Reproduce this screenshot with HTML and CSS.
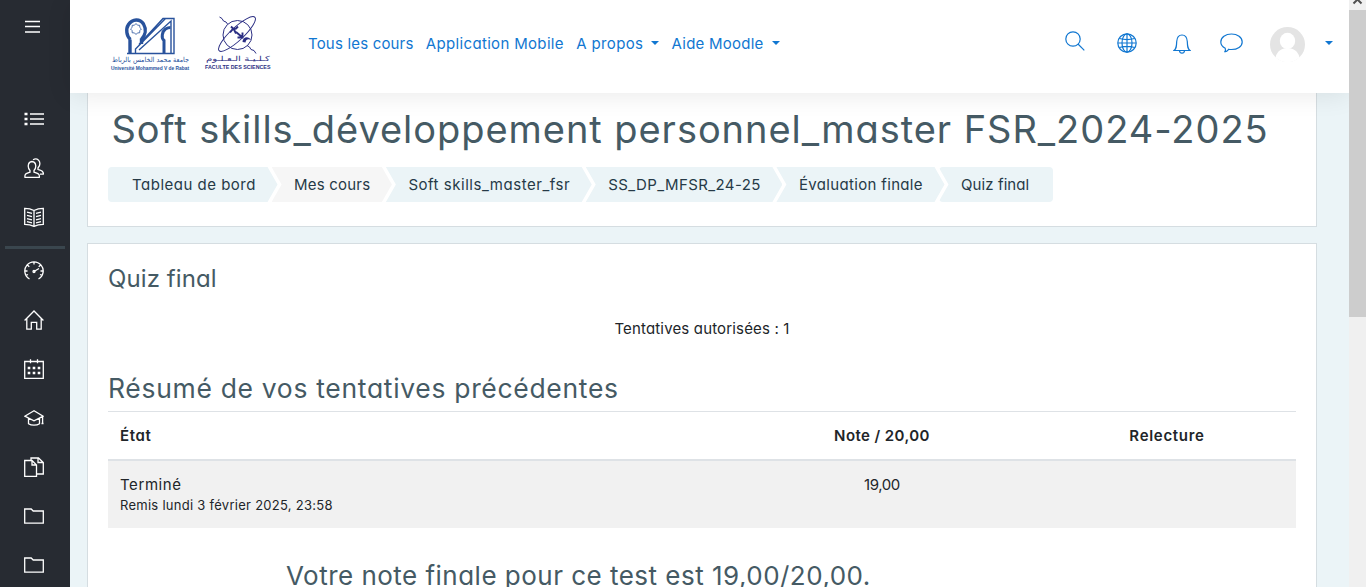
FILE: index.html
```html
<!DOCTYPE html>
<html lang="fr">
<head>
<meta charset="utf-8">
<title>Quiz final</title>
<link rel="stylesheet" href="styles.css">
</head>
<body>
<div class="app">
  <aside class="sidebar">
    <div class="side-top">
      <svg class="burger" width="15" height="14" viewBox="0 0 15 14"><path d="M0 1.500h15M0 6.500h15M0 12h15"/></svg>
    </div>
    <nav class="side-group">
      <svg viewBox="0 0 20 20"><path d="M6 5h14M6 10h14M6 15h14" /><path class="dots" d="M.5 5h3M.5 10h3M.5 15h3"/></svg>
      <svg viewBox="0 0 20 20"><path d="M1 19.300C.3 15.500 3 15.300 6 14.200v-1.700C3.500 10 3.300 4 8 3.500c4.700.5 4.500 6.500 2 9v1.700c3 1.100 6 1.300 5.300 5.100zM9 1.800C13 -.5 17 2.500 15.500 7.500c-.3 1-1 1.700-1.500 2.300v1.700c3 1 6 1.300 5.300 4.700H16"/></svg>
      <svg viewBox="0 0 20 20"><path d="M10 3.500C7 1.800 4 1.300.7 1.300v16c3.300 0 6.300.5 9.300 2 3-1.500 6-2 9.300-2v-16C16 1.300 13 1.800 10 3.500v15.800M3 5.200l5 1.200M3 8.400l5 1.200M3 11.600l5 1.200M3 14.600l5 1.200M17 5.200l-5 1.200M17 8.400l-5 1.200M17 11.600l-5 1.200M17 14.600l-5 1.200"/></svg>
    </nav>
    <hr class="side-rule">
    <nav class="side-group lower">
      <svg viewBox="0 0 20 20"><path d="M5.500 18A9.200 9.200 0 1 1 14.500 18M10 1v2.600M1 10h2.500M16.500 10H19M3.600 4.200l1.700 1.600M16.400 4.200l-1.700 1.600M2 14.300l2-.8M18 14.300l-2-.8M10 10.500l5-3"/><circle cx="10" cy="10.500" r="1"/></svg>
      <svg viewBox="0 0 20 20"><path d="M.6 10.500L10 1l9.400 9.500M2.800 8.500v10.700h4.500v-6.900h5.400v6.900h4.500V8.500"/></svg>
      <svg viewBox="0 0 20 20"><path d="M.7 2.500h18.600v16.800H.7zM6.500.3v4M13.500.3v4"/><path class="dots" d="M3.700 9h2.600M8.700 9h2.600M13.700 9h2.600M3.700 14h2.600M8.700 14h2.600M13.700 14h2.600"/></svg>
      <svg viewBox="0 0 20 20"><path d="M10 2.800L.8 8.200l9.200 4.600 9.200-4.600zM4.500 10v5.700c3 2 8 2 11 0V10M18.600 8.500V15M17.500 15.500h2"/></svg>
      <svg viewBox="0 0 20 20"><path d="M.7 3.500H8l4.500 4.500v11.500H.7zM8 3.500V8h4.500M7 3.500V1h7.500L19.300 5.500v11.500H12.800M14 1v4.500h5.200"/></svg>
      <svg viewBox="0 0 20 20"><path d="M.7 17.200v-14.200h6.500l2 2h10.100v12.200z"/></svg>
      <svg viewBox="0 0 20 20"><path d="M.7 17.200v-14.200h6.500l2 2h10.100v12.200z"/></svg>
    </nav>
  </aside>

  <div class="page">
    <header class="topbar">
      <div class="logos">
        <svg class="logo-um5" width="80" height="56" viewBox="0 0 80 56">
          <g fill="none" stroke="#28529c" stroke-width="1.400">
            <path d="M16 37.500h47V2.500H52L28 28.500M28 34L60 5v32M24.500 37.500V33L54.500 2.500"/>
            <path d="M19 37V23.500M30.500 28V22.500M19.500 23.500C15.500 20.500 14.500 13 17.500 8.500 21.500 2.500 29 2.500 32.500 8c3 5 2 11-2 15.500" stroke-width="3.400"/>
            <path d="M25 7.500l1.500 1.700 2.200.1.100 2.200 1.600 1.500-1.600 1.600-.1 2.200-2.200.1-1.500 1.600-1.500-1.600-2.300-.1-.1-2.200-1.600-1.600 1.600-1.500.1-2.200 2.300-.1z" stroke-width=".8"/>
            <path d="M53 37V24.500c-3-2.500-2-9 1.500-11.500 1.700-1 3-1.500 5-1.500" stroke-width="3"/>
          </g>
          <text class="logo-ar" x="1" y="45.500" textLength="77" lengthAdjust="spacingAndGlyphs">جامعة محمد الخامس بالرباط</text>
          <text class="logo-fr" x="0" y="53.500" textLength="78" lengthAdjust="spacingAndGlyphs">Université Mohammed V de Rabat</text>
        </svg>
        <svg class="logo-fsr" width="68" height="56" viewBox="0 0 68 56">
          <g fill="none" stroke="#2b2e83" stroke-width="1">
            <circle cx="32.500" cy="19" r="14.500"/>
            <ellipse cx="32" cy="18" rx="24.500" ry="6.500" transform="rotate(-43 32 18)"/>
            <path d="M14.500 1l2.500 1.500 1.500 2.500 2.500 1 1.500 2M42 29.500l2.500 1.500 1.500 2.500 3 1 2 3"/>
          </g>
          <path d="M25 16.500l3-3.500 3-.5 2-2M26 10.500l3 3 2 4M31 16l6 5M37.500 16.500v5h-5" fill="none" stroke="#2b2e83" stroke-width="1.900"/>
          <path d="M37.500 26c0-5 6-6.500 8.500-2-3-1.500-5-.5-5.500 2.500z" fill="#2b2e83"/>
          <text class="logo-ar fs" x="1" y="45" textLength="64" lengthAdjust="spacingAndGlyphs">كـلـيـة الـعـلـوم</text>
          <text class="logo-fr fs" x="0" y="53" textLength="65.500" lengthAdjust="spacingAndGlyphs">FACULTE DES SCIENCES</text>
        </svg>
      </div>
      <nav class="menu">
        <a class="m1">Tous les cours</a>
        <a class="m2">Application Mobile</a>
        <a class="m3">A propos<i class="caret"></i></a>
        <a class="m4">Aide Moodle<i class="caret"></i></a>
      </nav>
      <div class="tools">
        <svg class="t-search" width="20" height="20" viewBox="0 0 20 20"><circle cx="8" cy="8" r="7.200"/><path d="M13 13l6.300 6.300"/></svg>
        <svg class="t-globe" width="20" height="20" viewBox="0 0 20 20"><circle cx="10" cy="10" r="9.200"/><ellipse cx="10" cy="10" rx="5" ry="9.200"/><path d="M10 .8v18.400M1 10h18M2.500 5.500c5 1.500 10 1.500 15 0M2.500 14.500c5-1.500 10-1.500 15 0"/></svg>
        <svg class="t-bell" width="18" height="20" viewBox="0 0 18 20"><path d="M1 16.500c2.500-2 2.500-4 2.700-9C4 3.500 6 1 9 1s5 2.500 5.300 6.500c.2 5 .2 7 2.700 9zM6.500 16.700c.3 3.300 4.700 3.300 5 0"/></svg>
        <svg class="t-chat" width="23" height="20" viewBox="0 0 23 20"><path d="M4.500 19c1-.8 1.200-2.500.7-3.800C2.300 13.700.8 11.500.8 9c0-4.500 4.700-8 10.700-8s10.700 3.500 10.700 8-4.700 7.500-10.700 7.500c-1 0-2 0-2.800-.2C7.500 17.800 6 18.700 4.500 19z"/></svg>
        <svg class="avatar" width="35" height="35" viewBox="0 0 35 35"><defs><clipPath id="a"><circle cx="17.500" cy="17.500" r="17.500"/></clipPath></defs><g clip-path="url(#a)"><rect width="35" height="35" fill="#e4e4e4"/><ellipse cx="17.500" cy="14" rx="7.700" ry="8.200" fill="#fff"/><path d="M5 35c0-7 3-12 9-13.500h7c6 1.500 9 6.500 9 13.500z" fill="#fff"/><path d="M0 30h35v5H0z" fill="#fff"/></g></svg>
        <i class="caret big"></i>
      </div>
    </header>

    <main class="content">
      <section class="card card-head">
        <h1>Soft skills_développement personnel_master FSR_2024-2025</h1>
        <ol class="crumbs">
          <li class="c1">Tableau de bord</li>
          <li class="c2">Mes cours</li>
          <li class="c3">Soft skills_master_fsr</li>
          <li class="c4">SS_DP_MFSR_24-25</li>
          <li class="c5">Évaluation finale</li>
          <li class="c6">Quiz final</li>
        </ol>
      </section>
      <section class="card card-quiz">
        <h2 class="quiz-name">Quiz final</h2>
        <p class="allowed">Tentatives autorisées : 1</p>
        <h3 class="summary-title">Résumé de vos tentatives précédentes</h3>
        <table class="summary">
          <thead><tr><th class="th1">État</th><th class="th2">Note / 20,00</th><th class="th3">Relecture</th></tr></thead>
          <tbody><tr><td><div class="state">Terminé</div><div class="date">Remis lundi 3 février 2025, 23:58</div></td><td class="grade">19,00</td><td></td></tr></tbody>
        </table>
        <h3 class="final">Votre note finale pour ce test est 19,00/20,00.</h3>
      </section>
    </main>
  </div>

  <div class="scrollbar">
    <div class="sb-btn"><svg width="17" height="10" viewBox="0 0 17 10"><path d="M4.500 3.500L8.500-.5l4 4" fill="none" stroke="#505050" stroke-width="2"/></svg></div>
    <div class="sb-thumb"></div>
  </div>
</div>
</body>
</html>
```
FILE: styles.css
```css
* { box-sizing: border-box; }
body {
  margin: 0;
  overflow: hidden;
  background: #ebf4f7;
  color: #212529;
  font-family: Inter, "Noto Sans", sans-serif;
  font-feature-settings: "cv11";
  font-size: 15px;
}
h1, h2, h3, p, ol { margin: 0; padding: 0; font-weight: 400; }
h1, h2, h3, p, li, a, th, td div, .grade { white-space: nowrap; }
.app { display: flex; width: 1366px; height: 587px; overflow: hidden; }

.sidebar { width: 70px; flex: none; background: #272b32; overflow: hidden; }
.side-top { height: 93px; padding: 20px 0 0 25px; }
.burger { display: block; fill: none; stroke: #fff; stroke-width: 1.300; }
.side-group { display: flex; flex-direction: column; gap: 29px; padding: 16px 0 0 24.400px; }
.side-group.lower { padding-top: 15px; }
.side-group svg { display: block; flex: none; width: 20px; height: 20px; fill: none; stroke: #fff; stroke-width: 1.300; }
.side-group .dots { stroke-width: 2.600; }
.side-rule { width: 60px; height: 3px; margin: 19px 5px -3px; border: 0; background: #3a464e; }

.page { flex: 1; min-width: 0; display: flex; flex-direction: column; }
.topbar {
  position: relative;
  z-index: 2;
  flex: none;
  height: 93px;
  display: flex;
  align-items: flex-start;
  background: #fff;
  box-shadow: 0 2px 24px rgba(0, 0, 0, .09);
}
.logos { display: flex; gap: 14px; padding: 16px 0 0 41px; width: 238px; flex: none; }
.logos svg { flex: none; overflow: visible; }
.logo-ar { font: 400 7px "DejaVu Sans", sans-serif; fill: #28529c; }
.logo-fr { font: 700 5.500px "Liberation Sans", sans-serif; fill: #28529c; }
.logos .fs { fill: #2b2e83; }
.menu { display: flex; gap: 12.300px; padding-top: 33px; color: #1177d1; line-height: 22px; }
.menu a { display: flex; align-items: center; }
.m1 { letter-spacing: .18px; }
.m2 { letter-spacing: .33px; }
.m3 { letter-spacing: .36px; }
.m4 { letter-spacing: .24px; }
.caret { width: 0; height: 0; margin: 0 0 2px 8px; border: 4px solid transparent; border-top-color: #1177d1; border-bottom: 0; }
.tools { display: flex; margin-left: auto; padding-right: 16px; }
.tools svg { flex: none; fill: none; stroke: #1177d1; stroke-width: 1.200; }
.t-search { margin-top: 31px; }
.t-globe { margin: 33.400px 0 0 32px; }
.t-bell { margin: 34.400px 0 0 36px; }
.t-chat { margin: 33.400px 0 0 29px; }
.tools .avatar { margin: 27px 0 0 27px; stroke: none; }
.tools .big { margin: 41px 0 0 20px; }

.content { padding: 0 17px; flex: 1; min-height: 0; }
.card { width: 1230px; background: #fff; border: 1px solid #d5dde1; padding: 0 20px; }
.card-head { height: 134px; border-top: 0; }
h1 { padding: 6px 0 0 3.500px; font-size: 38px; line-height: 60px; color: #455a64; letter-spacing: .950px; }
.crumbs { display: flex; list-style: none; margin-top: 8px; line-height: 35px; color: #263a47; }
.crumbs li {
  height: 35px;
  margin-left: -6px;
  padding: 0 21.600px 0 22.500px;
  background: #ebf4f7;
  clip-path: polygon(0 0, calc(100% - 10px) 0, 100% 50%, calc(100% - 10px) 100%, 0 100%, 10px 50%);
}
.crumbs .c1 { margin-left: 0; padding-left: 24px; letter-spacing: .5px; border-radius: 4px; clip-path: polygon(0 0, calc(100% - 10px) 0, 100% 50%, calc(100% - 10px) 100%, 0 100%); }
.crumbs .c2 { background: #f6f6f6; letter-spacing: .2px; }
.crumbs .c3 { letter-spacing: .53px; }
.crumbs .c4 { letter-spacing: .4px; }
.crumbs .c5 { letter-spacing: .34px; }
.crumbs .c6 { padding-right: 24px; letter-spacing: .1px; border-radius: 4px; clip-path: polygon(0 0, 100% 0, 100% 100%, 0 100%, 10px 50%); }

.card-quiz { margin-top: 16px; height: 400px; }
.quiz-name { padding-top: 18px; font-size: 24px; line-height: 34px; color: #455a64; letter-spacing: .1px; }
.allowed { margin-top: 22px; text-align: center; line-height: 22px; letter-spacing: .16px; }
.summary-title { margin-top: 29px; font-size: 26.500px; line-height: 38px; color: #455a64; letter-spacing: .68px; }
.summary { width: 1188px; margin-top: 4px; border-collapse: collapse; table-layout: fixed; border-top: 1px solid #dee2e6; }
.summary th { height: 48px; padding: 0 12px; font-weight: 600; text-align: center; border-bottom: 2px solid #dee2e6; }
.summary .th1 { width: 618px; text-align: left; letter-spacing: .6px; }
.summary .th2 { width: 312px; letter-spacing: .42px; }
.summary .th3 { letter-spacing: .7px; }
.summary td { height: 68px; padding: 13px 12px 0; vertical-align: top; line-height: 22px; }
.summary tbody { background: #f1f1f1; }
.state { letter-spacing: .58px; }
.summary .date { font-size: 13px; line-height: 19px; letter-spacing: .27px; }
.summary .grade { text-align: center; letter-spacing: -.4px; }
.final { padding: 29px 0 0 178px; font-size: 26px; line-height: 38px; color: #455a64; letter-spacing: .48px; }

.scrollbar { width: 17px; flex: none; background: #f0f0f0; position: relative; z-index: 3; }
.sb-btn { height: 10px; }
.sb-btn svg { display: block; }
.sb-thumb { height: 307px; background: #cdcdcd; }
```
